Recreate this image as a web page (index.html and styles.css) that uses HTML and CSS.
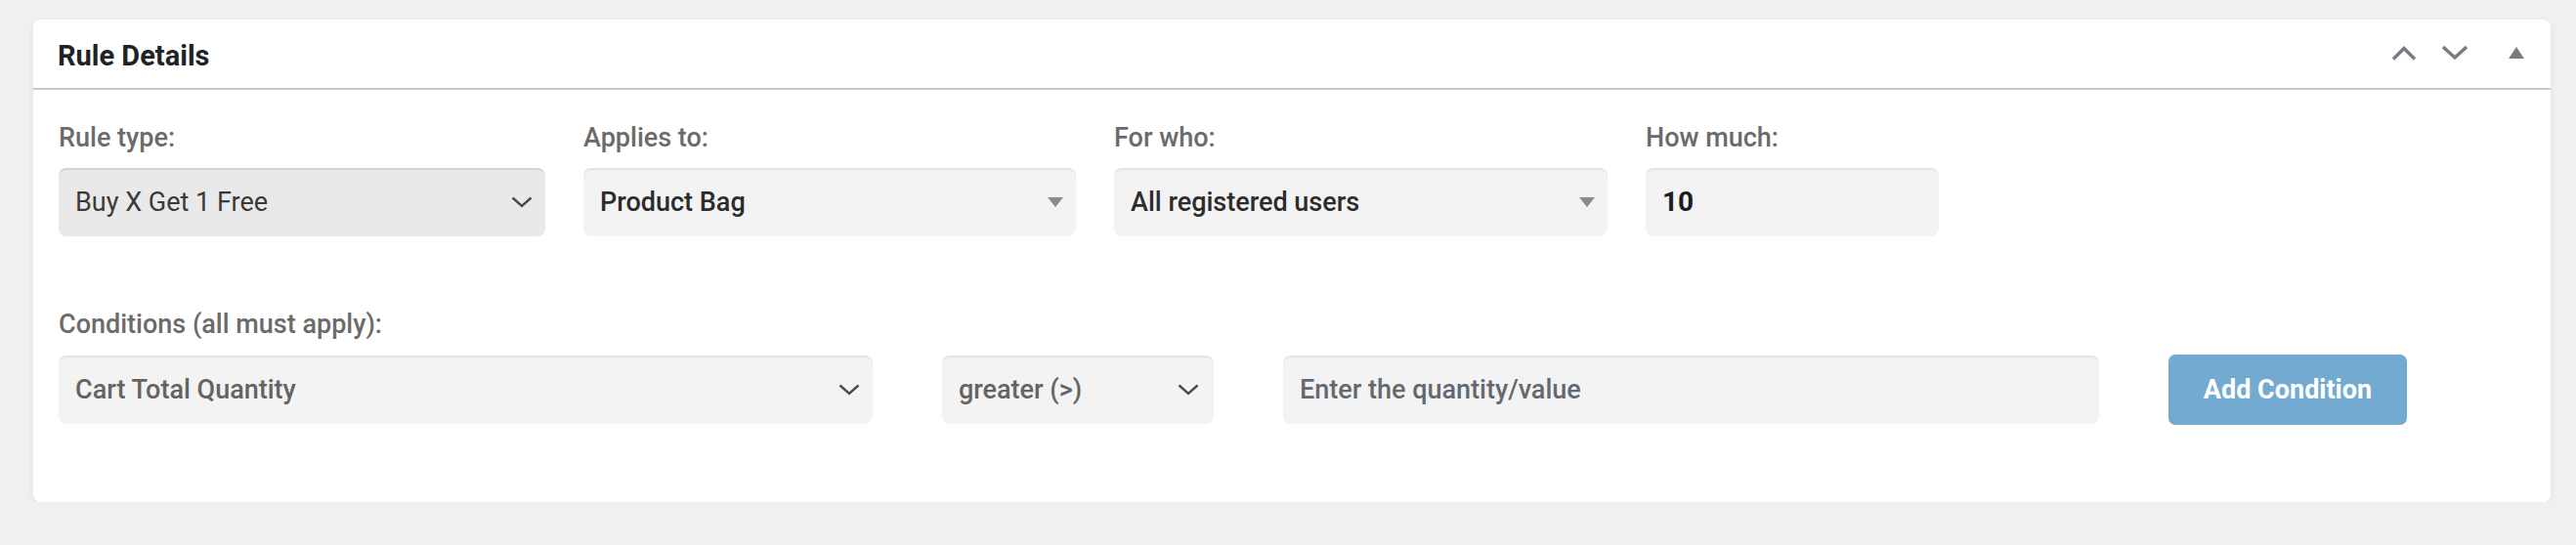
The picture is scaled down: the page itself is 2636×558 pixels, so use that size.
FILE: index.html
```html
<!DOCTYPE html>
<html lang="en">
<head>
<meta charset="utf-8">
<title>Rule Details</title>
<link rel="stylesheet" href="styles.css">
</head>
<body>
<div class="card">
  <div class="card-header">
    <h2 class="title">Rule Details</h2>
    <div class="header-actions">
      <svg class="hicon hicon-up" width="26" height="16" viewBox="0 0 26 16"><path d="M2 14.5 L13 3.5 L24 14.5" fill="none" stroke="#787c82" stroke-width="3.5"/></svg>
      <svg class="hicon hicon-down" width="28" height="16" viewBox="0 0 28 16"><path d="M2 2 L14 13 L26 2" fill="none" stroke="#787c82" stroke-width="3.5"/></svg>
      <svg class="hicon hicon-tri" width="16" height="12" viewBox="0 0 16 12"><polygon points="8,0 16,12 0,12" fill="#787c82"/></svg>
    </div>
  </div>
  <div class="card-body">
    <div class="row row-top">
      <div class="field w-type">
        <div class="label">Rule type:</div>
        <div class="control select active">
          <span class="val val-regular">Buy X Get 1 Free</span>
          <svg class="chev" width="22" height="12" viewBox="0 0 22 12"><path d="M1.5 1.5 L11 10 L20.5 1.5" fill="none" stroke="#4a4a4a" stroke-width="2.4"/></svg>
        </div>
      </div>
      <div class="field w-applies">
        <div class="label">Applies to:</div>
        <div class="control select">
          <span class="val val-dark">Product Bag</span>
          <svg class="tri" width="16" height="10" viewBox="0 0 16 10"><polygon points="0,0 16,0 8,10" fill="#8a8a8a"/></svg>
        </div>
      </div>
      <div class="field w-who">
        <div class="label">For who:</div>
        <div class="control select">
          <span class="val val-dark">All registered users</span>
          <svg class="tri" width="16" height="10" viewBox="0 0 16 10"><polygon points="0,0 16,0 8,10" fill="#8a8a8a"/></svg>
        </div>
      </div>
      <div class="field w-much">
        <div class="label">How much:</div>
        <div class="control input">
          <span class="val val-num">10</span>
        </div>
      </div>
    </div>

    <div class="label label-cond">Conditions (all must apply):</div>
    <div class="row row-cond">
      <div class="control select w-cart">
        <span class="val val-gray">Cart Total Quantity</span>
        <svg class="chev" width="22" height="12" viewBox="0 0 22 12"><path d="M1.5 1.5 L11 10 L20.5 1.5" fill="none" stroke="#4a4a4a" stroke-width="2.4"/></svg>
      </div>
      <div class="control select w-op">
        <span class="val val-gray">greater (&gt;)</span>
        <svg class="chev" width="22" height="12" viewBox="0 0 22 12"><path d="M1.5 1.5 L11 10 L20.5 1.5" fill="none" stroke="#4a4a4a" stroke-width="2.4"/></svg>
      </div>
      <div class="control input w-value">
        <span class="val val-placeholder">Enter the quantity/value</span>
      </div>
      <button class="btn" type="button">Add Condition</button>
    </div>
  </div>
</div>
</body>
</html>
```

FILE: styles.css
```css
* {
  box-sizing: border-box;
}

html, body {
  margin: 0;
  padding: 0;
}

body {
  background: #f0f0f0;
  font-family: Roboto, "Liberation Sans", Arial, sans-serif;
  padding: 20px 26px 0 34px;
}

.card {
  width: 2576px;
  background: #ffffff;
  border-radius: 8px;
  box-shadow: 0 2px 6px rgba(0, 0, 0, 0.07);
}

.card-header {
  height: 72px;
  padding: 4px 27px 0 25px;
  border-bottom: 2px solid #c8c8cc;
  display: flex;
  align-items: center;
  justify-content: space-between;
}

.title {
  margin: 0;
  font-size: 29px;
  line-height: 66px;
  font-weight: 700;
  color: #1d2327;
}

.header-actions {
  display: flex;
  align-items: center;
  height: 66px;
}

.hicon {
  display: block;
}

.hicon-up {
  margin-top: -6px;
}

.hicon-down {
  margin-left: 25px;
  margin-top: -6px;
}

.hicon-tri {
  margin-left: 41px;
  margin-top: -6px;
}

.card-body {
  padding: 33px 26px 79px 26px;
}

.row {
  display: flex;
  align-items: flex-end;
}

.row-top {
  gap: 39px;
}

.field {
  display: flex;
  flex-direction: column;
}

.label {
  font-size: 27px;
  line-height: 32px;
  font-weight: 500;
  color: #6b6b6b;
  margin-bottom: 15px;
}

.label-cond {
  margin-top: 74px;
}

.control {
  height: 70px;
  border-radius: 8px;
  background: #f3f3f3;
  box-shadow: inset 0 2px 0 rgba(0, 0, 0, 0.06);
  display: flex;
  align-items: center;
  justify-content: space-between;
  padding: 0 13px 0 17px;
}

.select.active {
  background: #e9e9e9;
  box-shadow: inset 0 2px 0 rgba(0, 0, 0, 0.09);
}

.val {
  font-size: 27px;
  line-height: 70px;
  white-space: nowrap;
}

.val-regular {
  font-weight: 400;
  color: #3a3a3a;
}

.val-dark {
  font-weight: 500;
  color: #2c2c2c;
}

.val-gray {
  font-weight: 500;
  color: #646464;
}

.val-placeholder {
  font-weight: 500;
  color: #646970;
}

.val-num {
  font-size: 28px;
  font-weight: 700;
  color: #1d1d1d;
}

.chev, .tri {
  display: block;
  flex: none;
}

.w-type {
  width: 498px;
}

.w-applies {
  width: 504px;
}

.w-who {
  width: 505px;
}

.w-much {
  width: 300px;
}

.row-cond {
  gap: 71px;
  align-items: center;
}

.w-cart {
  width: 833px;
}

.w-op {
  width: 278px;
  padding-right: 15px;
}

.w-value {
  width: 835px;
}

.btn {
  width: 244px;
  height: 72px;
  border: none;
  border-radius: 7px;
  background: #72aad2;
  color: #ffffff;
  font-family: Roboto, "Liberation Sans", Arial, sans-serif;
  font-size: 27px;
  font-weight: 700;
  padding: 0;
  cursor: pointer;
}
```
